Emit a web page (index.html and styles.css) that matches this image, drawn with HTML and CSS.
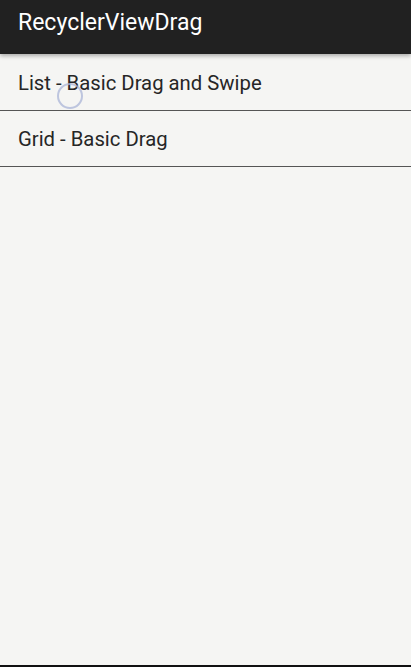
FILE: index.html
```html
<!DOCTYPE html>
<html lang="en">
<head>
  <meta charset="UTF-8">
  <title>RecyclerViewDrag</title>
  <link rel="stylesheet" href="styles.css">
</head>
<body>

  <div class="toolbar">RecyclerViewDrag</div>

  <!-- demo list -->
  <div class="list">
    <div class="row">
      List - Basic Drag and Swipe
      <span class="touch"></span>
    </div>
    <div class="row">Grid - Basic Drag</div>
  </div>

</body>
</html>
```

FILE: styles.css
```css
body {
  margin: 0;
  height: 667px;
  box-sizing: border-box;
  background: #f5f5f3;
  font-family: Roboto, sans-serif;
  color: #262626;
  border-bottom: 2px solid #111;
  overflow: hidden;
}

.toolbar {
  position: relative;
  z-index: 1;
  height: 54px;
  padding-left: 18px;
  background: #212121;
  color: #fff;
  font-size: 23px;
  line-height: 46px;
  box-shadow: 0 2px 4px rgba(0, 0, 0, 0.3);
}

.list {
  padding-top: 1px;
}

.row {
  position: relative;
  height: 55px;
  padding-left: 18px;
  font-size: 20.3px;
  line-height: 56px;
  border-bottom: 1px solid #555;
}

.touch {
  position: absolute;
  left: 57px;
  top: 28px;
  width: 26px;
  height: 26px;
  border: 2px solid rgba(170, 180, 215, 0.75);
  border-radius: 50%;
  box-sizing: border-box;
}
```
